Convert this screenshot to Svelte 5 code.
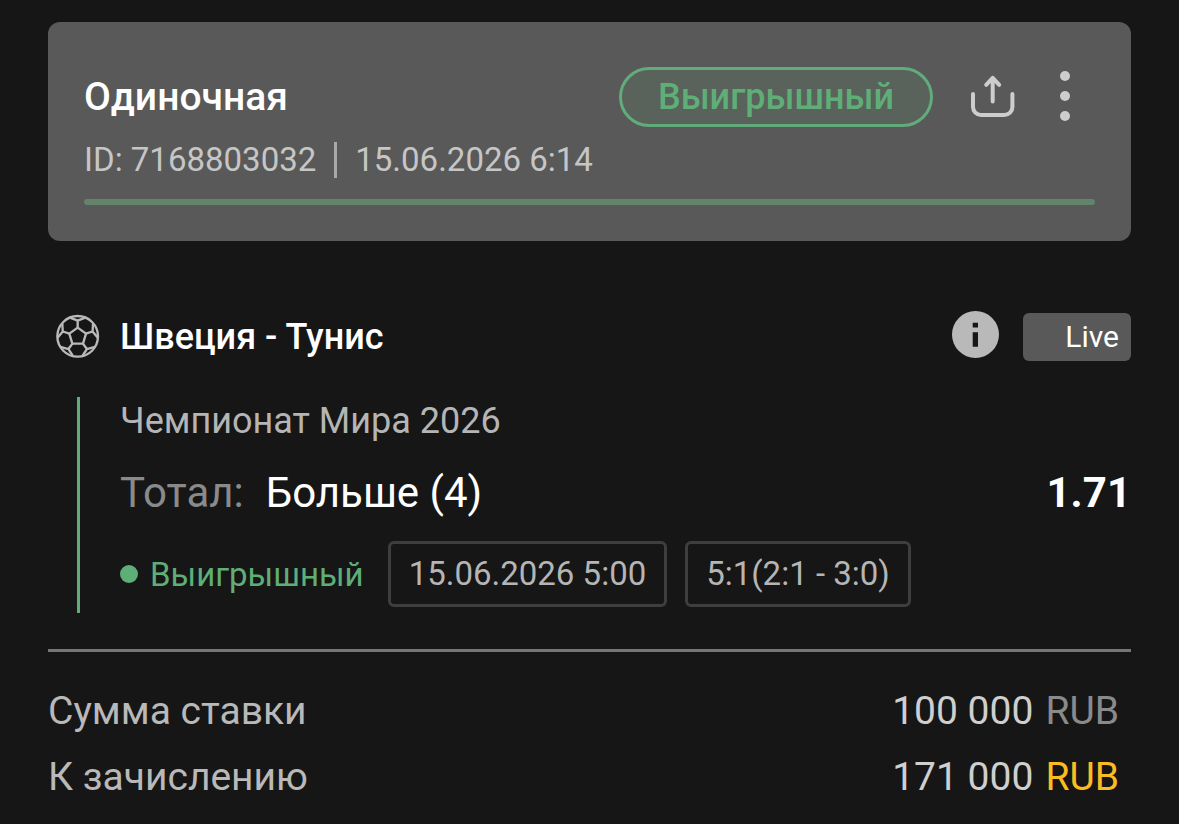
<script lang="ts">
	const bet = {
		type: 'Одиночная',
		id: '7168803032',
		placedAt: '15.06.2026 6:14',
		status: 'Выигрышный'
	};

	const event = {
		teams: 'Швеция - Тунис',
		league: 'Чемпионат Мира 2026',
		market: 'Тотал:',
		pick: 'Больше (4)',
		odds: '1.71',
		startsAt: '15.06.2026 5:00',
		score: '5:1(2:1 - 3:0)'
	};

	const totals = [
		{ label: 'Сумма ставки', amount: '100 000', currency: 'RUB', win: false },
		{ label: 'К зачислению', amount: '171 000', currency: 'RUB', win: true }
	];

	const sectors = [0, 72, 144, 216, 288];
</script>

<main class="bet">
	<header class="card">
		<div class="card-top">
			<h1>{bet.type}</h1>
			<span class="pill">{bet.status}</span>
			<button class="share" type="button" aria-label="Поделиться">
				<svg viewBox="0 0 48 48" width="48" height="48" fill="none" stroke="currentColor" stroke-width="4" stroke-linecap="round" stroke-linejoin="round">
					<path d="M4 21v13a8 8 0 0 0 8 8h23.4a8 8 0 0 0 8-8V21" />
					<path d="M23.7 28.5V5M17.2 11.8l6.5-7 6.5 7" />
				</svg>
			</button>
			<button class="more" type="button" aria-label="Ещё">
				<svg viewBox="0 0 10 52" width="10" height="52" fill="currentColor">
					<circle cx="5" cy="5" r="5" />
					<circle cx="5" cy="25" r="5" />
					<circle cx="5" cy="45" r="5" />
				</svg>
			</button>
		</div>
		<p class="meta">
			<span>ID: {bet.id}</span>
			<span class="placed">{bet.placedAt}</span>
		</p>
		<div class="bar"></div>
	</header>

	<section class="event">
		<div class="event-top">
			<svg class="ball" viewBox="0 0 132 132" width="44" height="44" fill="none" stroke="currentColor" stroke-width="7" stroke-linejoin="round" aria-hidden="true">
				<circle cx="65" cy="64" r="61" />
				<path d="M65 38l25 18-9 30H49l-9-30z" />
				{#each sectors as angle}
					<path transform="rotate({angle} 65 64)" d="M65 38V17M42 8l23 9 23-9" />
				{/each}
			</svg>
			<h2>{event.teams}</h2>
			<button class="info" type="button" aria-label="Информация">
				<svg viewBox="0 0 48 48" width="48" height="48">
					<circle cx="24.5" cy="21.5" r="23.5" fill="#b9b9b9" />
					<path d="M21.7 9.7H27v4.8h-5.3zM21.7 19.3H27v14.4h-5.3z" fill="#161616" />
				</svg>
			</button>
			<span class="live">Live</span>
		</div>

		<div class="details">
			<p class="league">{event.league}</p>
			<p class="market">
				<span class="market-name">{event.market}</span>
				<span>{event.pick}</span>
				<strong>{event.odds}</strong>
			</p>
			<div class="result">
				<span class="status">{bet.status}</span>
				<span class="chip">{event.startsAt}</span>
				<span class="chip">{event.score}</span>
			</div>
		</div>
	</section>

	<dl class="totals">
		{#each totals as row}
			<div>
				<dt>{row.label}</dt>
				<dd>
					{row.amount}
					<span class:win={row.win}>{row.currency}</span>
				</dd>
			</div>
		{/each}
	</dl>
</main>

<style>
	:global(body) {
		background: #161616;
	}

	.bet {
		padding: 22px 48px 14px;
		color: #fff;
		font-family: Roboto, 'Noto Sans', sans-serif;
		font-size: 33px;
		white-space: nowrap;
	}

	h1,
	h2,
	p,
	dl,
	dd {
		margin: 0;
	}

	h1,
	h2 {
		flex: 1;
		font-size: 36px;
		font-weight: 500;
		line-height: 48px;
	}

	h1 {
		font-size: 39px;
	}

	button {
		display: flex;
		align-items: center;
		justify-content: center;
		padding: 0;
		border: 0;
		background: none;
		color: #cdcdcd;
		cursor: pointer;
	}

	svg {
		display: block;
		overflow: visible;
	}

	.card {
		padding: 45px 36px 36px;
		border-radius: 12px;
		background: #595959;
	}

	.card-top {
		display: flex;
		align-items: center;
	}

	.pill {
		padding: 0 36px;
		border: 3px solid #62ab7b;
		border-radius: 30px;
		background: #59625b;
		color: #5fae78;
		font-size: 36px;
		font-weight: 500;
		line-height: 54px;
	}

	.share {
		margin-left: 36px;
	}

	.more {
		width: 60px;
		margin-left: 18px;
	}

	.meta {
		display: flex;
		margin-top: 15px;
		color: #c6c6c6;
		line-height: 36px;
	}

	.placed {
		margin-left: 18px;
		padding-left: 18px;
		border-left: 3px solid #a8a8a8;
	}

	.bar {
		height: 6px;
		margin-top: 21px;
		border-radius: 3px;
		background: #62836c;
	}

	.event {
		margin-top: 72px;
		padding-bottom: 36px;
		border-bottom: 3px solid #757575;
	}

	.event-top {
		display: flex;
		align-items: center;
		padding-left: 8px;
	}

	.ball {
		margin-right: 20px;
		color: #b9b9b9;
	}

	.live {
		box-sizing: border-box;
		width: 108px;
		margin-left: 24px;
		padding-right: 12px;
		border-radius: 6px;
		background: #595959;
		font-size: 30px;
		line-height: 48px;
		text-align: right;
	}

	.details {
		display: grid;
		gap: 24px;
		margin: 36px 0 0 29px;
		padding: 0 0 6px 40px;
		border-left: 3px solid #62ab7b;
	}

	.league {
		color: #b5b5b5;
		font-size: 36px;
		line-height: 48px;
	}

	.market {
		display: flex;
		gap: 22px;
		font-size: 42px;
		line-height: 48px;
	}

	.market-name {
		color: #8a8a8a;
	}

	.market strong {
		margin-left: auto;
		font-weight: 700;
	}

	.result {
		display: flex;
		align-items: center;
	}

	.status {
		display: flex;
		align-items: center;
		gap: 12px;
		margin-right: 6px;
		color: #5fae78;
	}

	.status::before {
		width: 18px;
		height: 18px;
		border-radius: 50%;
		background: currentColor;
		content: '';
	}

	.chip {
		margin-left: 18px;
		padding: 0 18px;
		border: 3px solid #3e3e3e;
		border-radius: 6px;
		color: #b5b5b5;
		line-height: 60px;
	}

	.totals {
		padding: 26px 12px 0 0;
		font-size: 39px;
		line-height: 66px;
	}

	.totals div {
		display: flex;
		justify-content: space-between;
	}

	dt {
		color: #b9b9b9;
	}

	dd {
		display: flex;
		gap: 12px;
		color: #cfcfcf;
	}

	dd span {
		color: #8a8a8a;
	}

	dd .win {
		color: #fbbc23;
	}
</style>
